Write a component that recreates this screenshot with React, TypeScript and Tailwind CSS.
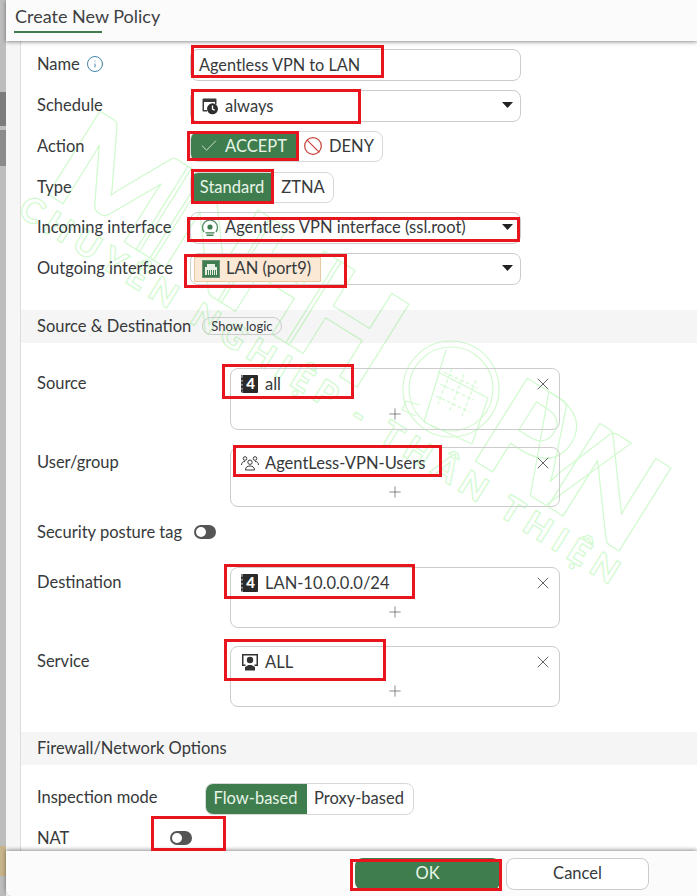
import * as React from "react";
import { Ban, Check, Info, Plus, X } from "lucide-react";

const GREEN = "bg-[#3f7d4e]";

function Caret() {
  return (
    <svg width="11" height="6" viewBox="0 0 11 6" className="mb-[2px] shrink-0">
      <path d="M0 0h11L5.5 6z" fill="#222" />
    </svg>
  );
}

function ScheduleIcon() {
  return (
    <svg width="18" height="18" viewBox="0 0 18 18" className="shrink-0">
      <path d="M2.500 1.500h12a1 1 0 0 1 1 1v5h-1.500V5H3v8h3v1.500H2.500a1 1 0 0 1-1-1v-11a1 1 0 0 1 1-1z" fill="#3a3a3a" />
      <circle cx="11.500" cy="11.800" r="5.500" fill="#2e2e2e" />
      <path d="M11.500 8.500v3.500l2.300 1.300" stroke="#fff" strokeWidth="1.300" fill="none" />
    </svg>
  );
}

function TunnelIcon() {
  return (
    <svg width="18" height="18" viewBox="0 0 18 18" className="shrink-0">
      <path d="M3 13A7.500 7.500 0 1 1 15 13" stroke="#5a8f6c" strokeWidth="1.300" fill="none" />
      <circle cx="9" cy="8" r="2.600" fill="#3f7d4e" />
      <path d="M4.500 13.200h9v1.300h-9zM5.500 15.500h7V17h-7z" fill="#3f7d4e" />
    </svg>
  );
}

function PortIcon() {
  return (
    <svg width="18" height="18" viewBox="0 0 18 18" className="shrink-0">
      <rect x="0.500" y="0.500" width="17" height="17" fill="#3f7d4e" stroke="#6b8f78" />
      <path d="M3 15V7h2V4h8v3h2v8z" fill="#e8efe6" />
      <path d="M5.500 10v5M7.500 10v5M9.500 10v5M11.500 10v5M13.500 10v5" stroke="#3f7d4e" strokeWidth="1" />
    </svg>
  );
}

function AddressIcon() {
  return (
    <span className="mr-[1px] flex h-[18px] w-[17px] shrink-0 items-center justify-center rounded-[1px] border-l-2 border-dotted border-l-[#888] bg-[#2a2a2a] text-[15px] leading-none font-black text-white">
      4
    </span>
  );
}

function UsersIcon() {
  return (
    <svg width="18" height="16" viewBox="0 0 18 16" fill="none" stroke="#3a3a3a" strokeWidth="1" className="shrink-0">
      <circle cx="9" cy="7.200" r="2.200" />
      <path d="M4.500 15c0-3 2-4 4.500-4s4.500 1 4.500 4z" />
      <circle cx="4" cy="3.500" r="1.800" />
      <circle cx="14" cy="3.500" r="1.800" />
      <path d="M.5 10c0-2.500 1.500-3.500 3.500-3.500M17.500 10c0-2.500-1.500-3.500-3.500-3.500" />
    </svg>
  );
}

function ServiceIcon() {
  return (
    <svg width="18" height="18" viewBox="0 0 18 18" className="shrink-0">
      <path d="M1 1h16v12h-3.500v-1.500H15.500v-9h-13v9h2V13H1z" fill="#333" />
      <circle cx="9" cy="7" r="3.200" fill="#333" />
      <path d="M4 17.500v-3.500l3.500-2h3l3.500 2v3.500z" fill="#333" />
    </svg>
  );
}

function Toggle() {
  return (
    <span className="flex h-[14px] w-[22px] items-center rounded-full bg-[#555] pl-[2px]">
      <span className="h-[10px] w-[10px] rounded-full bg-white" />
    </span>
  );
}

function Label({ children }: { children: React.ReactNode }) {
  return <div className="flex w-[153px] shrink-0 items-center gap-[6px] pb-[2px]">{children}</div>;
}

function SelectBox({ children }: { children: React.ReactNode }) {
  return (
    <div className="flex h-[32px] w-[331px] items-center justify-between rounded-[8px] border border-[#ccc] pr-[7px] pl-[10px]">
      <div className="flex items-center gap-[6px]">{children}</div>
      <Caret />
    </div>
  );
}

function MultiBox({ label, icon, value, h }: { label: string; icon: React.ReactNode; value: string; h: string }) {
  return (
    <div className="flex items-start">
      <div className="flex h-[30px] w-[193px] shrink-0 items-center">{label}</div>
      <div className={`${h} flex w-[330px] flex-col rounded-[8px] border border-[#ccc]`}>
        <div className="flex h-[29px] shrink-0 items-center justify-between pr-[6px] pl-[10px]">
          <div className="flex items-center gap-[6px]">
            {icon}
            <span>{value}</span>
          </div>
          <X size={20} strokeWidth={1} color="#444" />
        </div>
        <div className="flex flex-1 items-center justify-center">
          <Plus size={18} strokeWidth={0.900} color="#555" />
        </div>
      </div>
    </div>
  );
}

function Band({ children }: { children: React.ReactNode }) {
  return <div className="-ml-[16px] flex h-[33px] items-center gap-[11px] bg-black/[0.04] pb-[1px] pl-[16px]">{children}</div>;
}

// red annotation rectangles drawn on top of the captured form
const marks = [
  "left-[191px] top-[45px] w-[193px] h-[33px]",
  "left-[191px] top-[89px] w-[170px] h-[35px]",
  "left-[187px] top-[131px] w-[112px] h-[30px]",
  "left-[191px] top-[169px] w-[83px] h-[35px]",
  "left-[187px] top-[217px] w-[333px] h-[25px]",
  "left-[184px] top-[254px] w-[163px] h-[34px]",
  "left-[222px] top-[364px] w-[132px] h-[35px]",
  "left-[233px] top-[445px] w-[209px] h-[32px]",
  "left-[224px] top-[564px] w-[191px] h-[35px]",
  "left-[224px] top-[639px] w-[162px] h-[42px]",
  "left-[151px] top-[816px] w-[75px] h-[35px]",
  "left-[350px] top-[859px] w-[152px] h-[32px]",
];

function Watermark() {
  return (
    <svg width="697" height="896" viewBox="0 0 697 896" className="pointer-events-none absolute top-0 left-0 -z-10" fill="none" stroke="#d2fad0" strokeWidth="1.200" strokeLinejoin="round">
      <g transform="rotate(32 30 230)" fontFamily="Lato, sans-serif" fontWeight="900">
        <text x="16" y="190" fontSize="135" textLength="385" lengthAdjust="spacing">MINHH</text>
        <text x="520" y="190" fontSize="135" textLength="190" lengthAdjust="spacing">PVN</text>
        <text x="10" y="224" fontSize="34" textLength="700" lengthAdjust="spacing">CHUYÊN NGHIỆP - THÂN THIỆN</text>
      </g>
      <circle cx="451" cy="389" r="48" />
      <circle cx="451" cy="389" r="42" />
      <path d="M446 350l-22 72 48 22 16-46-50-26M420 405l-14-4-4 9 14 6" />
      <path d="M444 372l34 16M440 384l34 16M436 396l34 16M452 368l-14 36M464 374l-14 36M476 380l-14 36" strokeDasharray="4 2" />
    </svg>
  );
}

export default function App() {
  return (
    <div className="relative isolate flex h-[896px] w-[697px] overflow-hidden bg-white font-[Lato,sans-serif] text-[16.500px] leading-[20px] text-[#37393b]">
      {/* page behind the dialog */}
      <div className="flex w-[6px] shrink-0 flex-col bg-[#bdbdbd]">
        <div className="h-[92px]" />
        <div className="h-[34px] bg-[#7c7c7c]" />
        <div className="h-[4px]" />
        <div className="h-[36px] bg-[#8b8b8b]" />
        <div className="h-[680px]" />
        <div className="h-[30px] bg-[#c8b48a]" />
      </div>

      <div className="flex min-w-0 flex-1 flex-col">
        <header className="z-10 flex h-[41px] shrink-0 flex-col bg-[#fbfbfb] pl-[9px] shadow-[0_1px_4px_rgba(0,0,0,0.45)]">
          <div className="pt-[4px] text-[18px] leading-[24px] text-[#3e4144]">Create New Policy</div>
          <div className="mt-[3px] -ml-[1px] h-[2px] w-[88px] bg-[#3f7d4e]" />
        </header>

        <div className="flex min-h-0 flex-1">
          <div className="w-[15px] shrink-0 border-r border-[#ddd] bg-[#f6f6f6]" />
          <main className="flex min-w-0 flex-1 flex-col overflow-hidden pt-[8px] pl-[16px]">
            <div className="flex flex-col gap-[9px]">
              <div className="flex">
                <Label>
                  Name <Info size={18} strokeWidth={1.300} color="#3f7fa5" />
                </Label>
                <div className="flex h-[32px] w-[331px] items-center rounded-[8px] border border-[#ccc] pb-[1px] pl-[8px] text-[16.300px]">Agentless VPN to LAN</div>
              </div>
              <div className="flex">
                <Label>Schedule</Label>
                <SelectBox>
                  <ScheduleIcon />
                  always
                </SelectBox>
              </div>
              <div className="flex">
                <Label>Action</Label>
                <div className="flex h-[31px] rounded-[8px] border border-[#d8d8d8]">
                  <div className={`${GREEN} flex w-[107px] items-center justify-center gap-[6px] rounded-l-[7px] pr-[3px] pb-[1px] text-[#e8f5e8]`}>
                    <Check size={20} strokeWidth={1} />
                    ACCEPT
                  </div>
                  <div className="flex w-[84px] items-center justify-center gap-[6px] pr-[3px] pb-[1px]">
                    <Ban size={20} strokeWidth={1.500} color="#c9443c" />
                    DENY
                  </div>
                </div>
              </div>
              <div className="mt-[1px] flex">
                <Label>Type</Label>
                <div className="flex h-[31px] rounded-[8px] border border-[#d8d8d8]">
                  <div className={`${GREEN} flex w-[82px] items-center justify-center rounded-l-[7px] pb-[1px] text-[#e8f5e8]`}>Standard</div>
                  <div className="flex w-[60px] items-center justify-center pb-[1px]">ZTNA</div>
                </div>
              </div>
              <div className="flex">
                <Label>Incoming interface</Label>
                <SelectBox>
                  <TunnelIcon />
                  <span className="pb-[2px]">Agentless VPN interface (ssl.root)</span>
                </SelectBox>
              </div>
              <div className="flex">
                <Label>Outgoing interface</Label>
                <div className="flex h-[32px] w-[331px] items-center justify-between rounded-[8px] border border-[#ccc] pr-[7px] pl-[3px]">
                  <div className="flex h-[25px] w-[127px] items-center gap-[6px] border border-[#e8c9a0] bg-[#fbe9d5] pl-[7px]">
                    <PortIcon />
                    <span className="pb-[2px]">LAN (port9)</span>
                  </div>
                  <Caret />
                </div>
              </div>
            </div>

            <div className="mt-[25px]">
              <Band>
                Source &amp; Destination
                <span className="rounded-full border border-[#ccc] px-[8px] text-[13px] leading-[16px]">Show logic</span>
              </Band>
            </div>

            <div className="mt-[25px]">
              <MultiBox label="Source" icon={<AddressIcon />} value="all" h="h-[62px]" />
            </div>
            <div className="mt-[17px]">
              <MultiBox label="User/group" icon={<UsersIcon />} value="AgentLess-VPN-Users" h="h-[60px]" />
            </div>
            <div className="mt-[13px] flex h-[24px] items-center gap-[12px]">
              Security posture tag
              <Toggle />
            </div>
            <div className="mt-[23px]">
              <MultiBox label="Destination" icon={<AddressIcon />} value="LAN-10.0.0.0/24" h="h-[61px]" />
            </div>
            <div className="mt-[18px]">
              <MultiBox label="Service" icon={<ServiceIcon />} value="ALL" h="h-[61px]" />
            </div>

            <div className="mt-[25px]">
              <Band>Firewall/Network Options</Band>
            </div>

            <div className="mt-[18px] flex items-center">
              <div className="w-[168px] shrink-0 pb-[4px]">Inspection mode</div>
              <div className="flex h-[32px] rounded-[8px] border border-[#d8d8d8]">
                <div className={`${GREEN} flex w-[101px] items-center justify-center rounded-l-[7px] pr-[2px] pb-[2px] text-[#e8f5e8]`}>Flow-based</div>
                <div className="flex w-[106px] items-center justify-center pr-[2px] pb-[2px]">Proxy-based</div>
              </div>
            </div>
            <div className="mt-[11px] flex h-[24px] items-center">
              <div className="w-[133px] shrink-0 pb-[1px]">NAT</div>
              <Toggle />
            </div>
          </main>
        </div>

        <footer className="z-10 flex h-[45px] shrink-0 justify-end gap-[6px] rounded-bl-[6px] bg-[#fbfbfb] pt-[7px] pr-[48px] shadow-[0_-1px_4px_rgba(0,0,0,0.45)]">
          <button className={`${GREEN} h-[32px] w-[145px] rounded-[8px] pb-[2px] text-[#e8f5e8]`}>OK</button>
          <button className="h-[32px] w-[143px] rounded-[8px] border border-[#ccc] bg-white pb-[2px]">Cancel</button>
        </footer>
      </div>

      <Watermark />

      {marks.map((m) => (
        <div key={m} className={`pointer-events-none absolute z-20 border-[3px] border-[#e8141e] ${m}`} />
      ))}
    </div>
  );
}
